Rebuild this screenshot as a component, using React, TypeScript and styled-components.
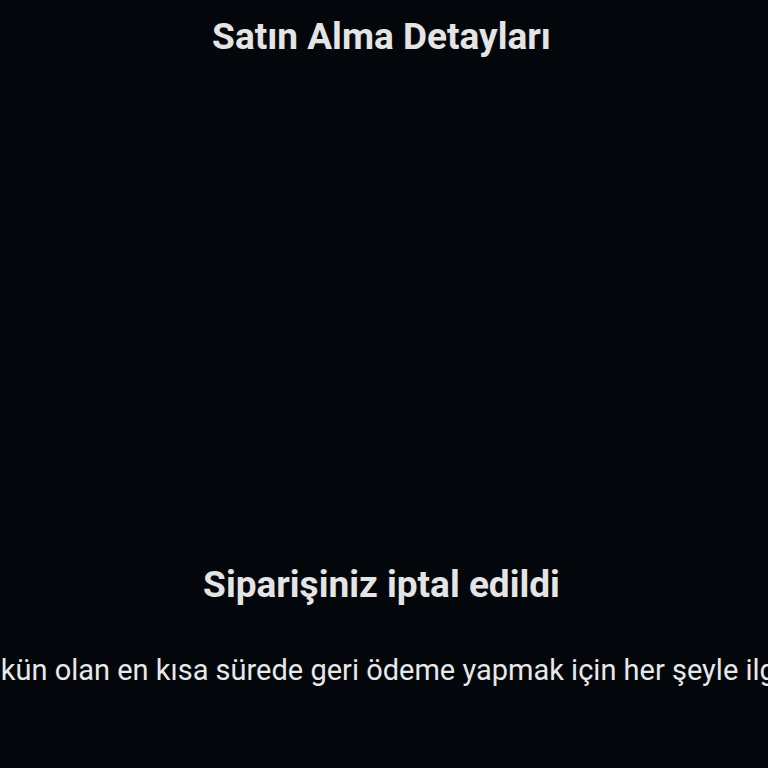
import * as React from "react";
import styled, { createGlobalStyle } from "styled-components";

const GlobalStyle = createGlobalStyle`
  html, body {
    margin: 0;
    padding: 0;
    background: #03060b;
  }
  body {
    font-family: Roboto, "Noto Sans", sans-serif;
    color: #e6e6e6;
  }
`;

const Page = styled.div`
  width: 768px;
  height: 768px;
  box-sizing: border-box;
  padding-right: 5px;
  overflow: hidden;
  display: flex;
  flex-direction: column;
  align-items: center;
  background: #03060b;
`;

const Title = styled.h1`
  margin: 14px 0 0;
  font-size: 37px;
  line-height: 46px;
  font-weight: 700;
  color: #e4e4e4;
`;

const Illustration = styled.div`
  height: 502px;
  width: 100%;
`;

const Status = styled.h2`
  margin: 0;
  font-size: 37px;
  line-height: 46px;
  font-weight: 700;
  color: #e4e4e4;
`;

const Message = styled.div<{ $shift: number }>`
  width: 100%;
  display: flex;
  justify-content: flex-start;
  margin-top: 44px;
  font-size: 29px;
  line-height: 36px;
  white-space: nowrap;
  color: #e8e8e8;

  span {
    margin-left: ${(p) => -p.$shift}px;
  }
`;

export default function App() {
  return (
    <>
      <GlobalStyle />
      <Page>
        <Title>Satın Alma Detayları</Title>
        <Illustration />
        <Status>Siparişiniz iptal edildi</Status>
        <Message $shift={66}>
          <span>Mümkün olan en kısa sürede geri ödeme yapmak için her şeyle ilgileneceğiz.</span>
        </Message>
      </Page>
    </>
  );
}
